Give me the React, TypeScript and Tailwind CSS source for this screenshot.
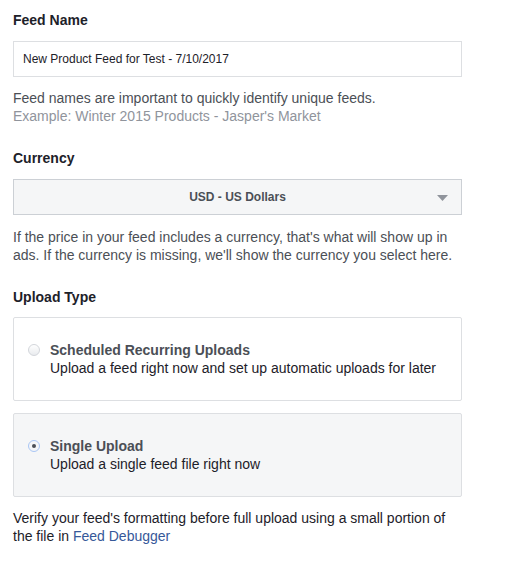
import { useState } from "react";

type Option = { id: string; title: string; desc: string };

const options: Option[] = [
  {
    id: "scheduled",
    title: "Scheduled Recurring Uploads",
    desc: "Upload a feed right now and set up automatic uploads for later",
  },
  {
    id: "single",
    title: "Single Upload",
    desc: "Upload a single feed file right now",
  },
];

function Radio({ checked }: { checked: boolean }) {
  if (checked) {
    return (
      <span className="flex h-[12px] w-[12px] shrink-0 items-center justify-center rounded-full border border-[#a9c6f5] bg-[#f5f6f7]">
        <span className="block h-[4px] w-[4px] rounded-full bg-[#4b4f56]" />
      </span>
    );
  }
  return (
    <span className="block h-[12px] w-[12px] shrink-0 rounded-full border border-[#d3d6db] bg-gradient-to-b from-[#ffffff] to-[#e9ebee]" />
  );
}

export default function App() {
  const [name, setName] = useState("New Product Feed for Test - 7/10/2017");
  const [selected, setSelected] = useState("single");

  return (
    <main className="min-h-[561px] w-[525px] bg-white pl-[13px] pt-[11px] font-['Liberation_Sans',Arial,sans-serif] text-[#1d2129]">
      <div className="w-[449px]">
        <h2 className="text-[14px] font-bold leading-[18px]">Feed Name</h2>
        <input
          className="mt-[12px] block h-[36px] w-full border border-[#dddfe2] bg-white px-[9px] text-[12px] text-[#1d2129] outline-none"
          value={name}
          onChange={(e) => setName(e.target.value)}
          aria-label="Feed name"
        />
        <p className="mt-[12px] text-[14px] leading-[18px] text-[#4b4f56]">
          Feed names are important to quickly identify unique feeds.
          <br />
          <span className="text-[#90949c]">Example: Winter 2015 Products - Jasper's Market</span>
        </p>

        <h2 className="mt-[24px] text-[14px] font-bold leading-[18px]">Currency</h2>
        <button className="relative mt-[12px] flex h-[36px] w-full items-center justify-center border border-[#ccd0d5] bg-[#f5f6f7] text-[12px] font-bold text-[#4b4f56]">
          USD - US Dollars
          <svg
            className="absolute right-[13px] top-[15px]"
            width="11"
            height="6"
            viewBox="0 0 11 6"
          >
            <path d="M0 0 L11 0 L5.5 6 Z" fill="#90949c" />
          </svg>
        </button>
        <p className="mt-[13px] text-[14px] leading-[18px] text-[#4b4f56]">
          If the price in your feed includes a currency, that's what will show up in ads. If the
          currency is missing, we'll show the currency you select here.
        </p>

        <h2 className="mt-[24px] text-[14px] font-bold leading-[18px]">Upload Type</h2>
        <div className="mt-[11px] flex flex-col gap-[12px]">
          {options.map((o) => {
            const on = selected === o.id;
            return (
              <div
                key={o.id}
                role="radio"
                aria-checked={on}
                tabIndex={0}
                onClick={() => setSelected(o.id)}
                className={
                  "flex cursor-pointer items-start gap-[10px] rounded-[2px] border border-[#dddfe2] py-[23px] pl-[14px] " +
                  (on ? "bg-[#f5f6f7]" : "bg-white")
                }
              >
                <span className="mt-[3px] block">
                  <Radio checked={on} />
                </span>
                <div className="text-[14px] leading-[18px]">
                  <p className="font-bold text-[#4b4f56]">{o.title}</p>
                  <p className="text-[#1d2129]">{o.desc}</p>
                </div>
              </div>
            );
          })}
        </div>

        <p className="mt-[12px] text-[14px] leading-[18px] text-[#1d2129]">
          Verify your feed's formatting before full upload using a small portion of the file in{" "}
          <a href="#" className="text-[#365899]">
            Feed Debugger
          </a>
        </p>
      </div>
    </main>
  );
}
